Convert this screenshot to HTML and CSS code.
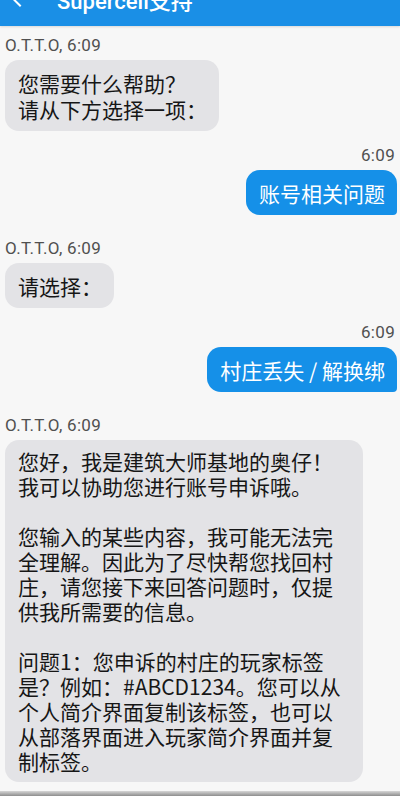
FILE: index.html
```html
<!DOCTYPE html>
<html lang="zh-CN">
<head>
    <meta charset="UTF-8">
    <meta name="viewport" content="width=device-width, initial-scale=1.0">
    <title>Supercell支持</title>
    <link rel="stylesheet" href="styles.css">
</head>
<body>

    <header class="topbar">
        <svg class="back" viewBox="0 0 24 24" width="24" height="24">
            <path d="M20 11H7.83l5.59-5.59L12 4l-8 8 8 8 1.41-1.41L7.83 13H20v-2z" fill="#fff"/>
        </svg>
        <span class="title">Supercell支持</span>
    </header>

    <main class="chat">
        <div class="msg in">
            <div class="meta">O.T.T.O, 6:09</div>
            <div class="bubble">您需要什么帮助？<br>请从下方选择一项：</div>
        </div>

        <div class="msg out">
            <div class="meta">6:09</div>
            <div class="bubble">账号相关问题</div>
        </div>

        <div class="msg in">
            <div class="meta">O.T.T.O, 6:09</div>
            <div class="bubble">请选择：</div>
        </div>

        <div class="msg out">
            <div class="meta">6:09</div>
            <div class="bubble">村庄丢失 / 解换绑</div>
        </div>

        <div class="msg in long">
            <div class="meta">O.T.T.O, 6:09</div>
            <div class="bubble">
                <p>您好，我是建筑大师基地的奥仔！<br>我可以协助您进行账号申诉哦。</p>
                <p>您输入的某些内容，我可能无法完<br>全理解。因此为了尽快帮您找回村<br>庄，请您接下来回答问题时，仅提<br>供我所需要的信息。</p>
                <p>问题1：您申诉的村庄的玩家标签<br>是？例如：#ABCD1234。您可以从<br>个人简介界面复制该标签，也可以<br>从部落界面进入玩家简介界面并复<br>制标签。</p>
            </div>
        </div>
    </main>

    <div class="bottom-edge"></div>

</body>
</html>
```

FILE: styles.css
```css
body {
    margin: 0;
    background-color: #f7f7f7;
    font-family: "Noto Sans", "Noto Sans CJK SC", sans-serif;
    overflow: hidden;
}

.topbar {
    height: 54px;
    margin-top: -28px;
    background-color: #1a8fe6;
    color: #fff;
    display: flex;
    align-items: center;
    padding-left: 8px;
    box-shadow: 0 1px 2px rgba(0, 0, 0, 0.12);
}
.back {
    margin-right: 25px;
}
.title {
    font-family: Roboto, "Noto Sans CJK SC", sans-serif;
    font-size: 22px;
    font-weight: 500;
}

.chat {
    display: flex;
    flex-direction: column;
    padding: 10px 3px 0 5px;
}
.msg {
    display: flex;
    flex-direction: column;
}
.msg.in {
    align-items: flex-start;
    margin-top: 24px;
}
.msg.out {
    align-items: flex-end;
    margin-top: 15px;
}
.msg:first-child {
    margin-top: 0;
}
.meta {
    font-family: Roboto, sans-serif;
    font-size: 17px;
    line-height: 18px;
    letter-spacing: 0.3px;
    color: #505050;
    margin-bottom: 6px;
}
.out .meta {
    margin-right: 2px;
}
.bubble {
    font-family: "Noto Sans CJK SC", sans-serif;
    font-size: 21px;
    line-height: 26px;
    padding: 10px 12px 9px 13px;
    border-radius: 14px;
    background-color: #e3e3e6;
    color: #161616;
}
.out .bubble {
    background-color: #1590e8;
    color: #fff;
    border-bottom-right-radius: 4px;
}
.long .bubble {
    width: 358px;
    box-sizing: border-box;
    line-height: 25px;
    padding: 9px 12px 8px 13px;
}
.long p {
    margin: 0;
}
.long p + p {
    margin-top: 25px;
}

.bottom-edge {
    height: 5px;
    margin-top: 9px;
    background: linear-gradient(#d6d6d6, #8e8e8e);
}
```
